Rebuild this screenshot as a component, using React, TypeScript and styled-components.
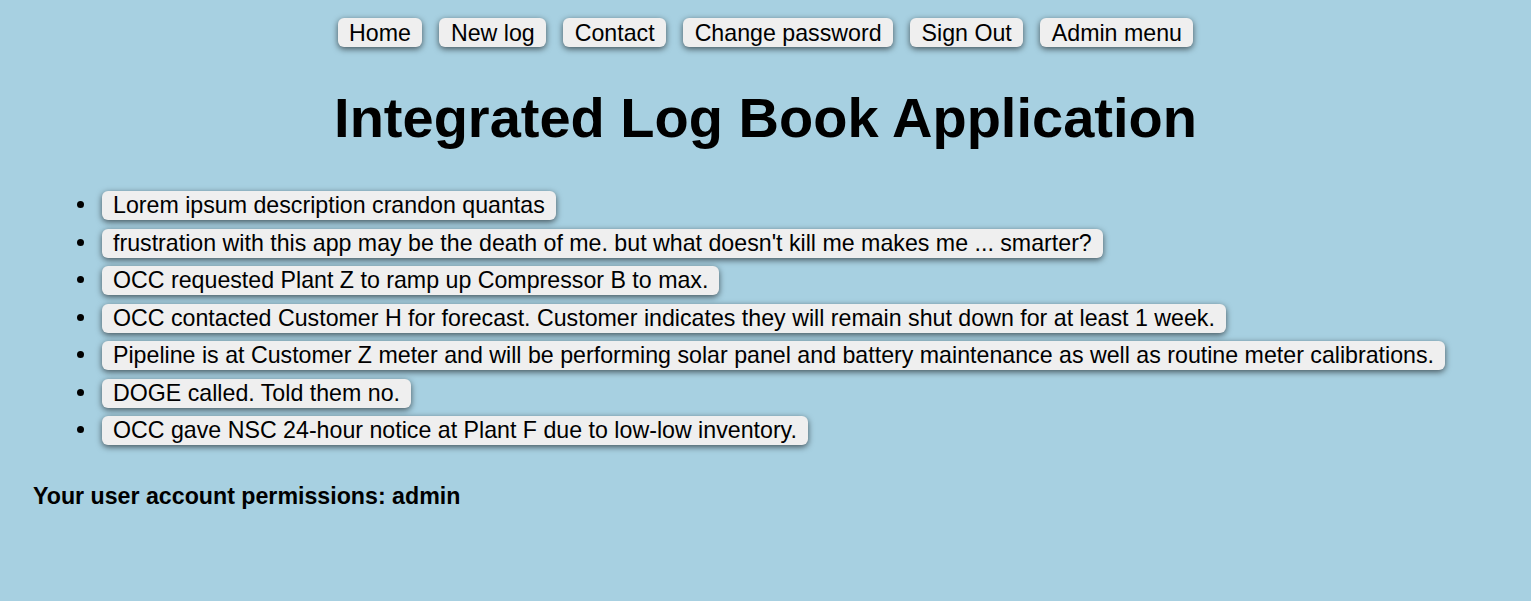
import React from "react";
import styled, { createGlobalStyle } from "styled-components";

const GlobalStyle = createGlobalStyle`
  body {
    margin: 0;
    background: #a7d0e1;
    font-family: "Liberation Sans", Arial, sans-serif;
    color: #000;
  }
`;

const links = ["Home", "New log", "Contact", "Change password", "Sign Out", "Admin menu"];

const logs = [
  "Lorem ipsum description crandon quantas",
  "frustration with this app may be the death of me. but what doesn't kill me makes me ... smarter?",
  "OCC requested Plant Z to ramp up Compressor B to max.",
  "OCC contacted Customer H for forecast. Customer indicates they will remain shut down for at least 1 week.",
  "Pipeline is at Customer Z meter and will be performing solar panel and battery maintenance as well as routine meter calibrations.",
  "DOGE called. Told them no.",
  "OCC gave NSC 24-hour notice at Plant F due to low-low inventory.",
];

const App: React.FC = () => {
  return (
    <PageS>
      <GlobalStyle />
      <NavS>
        {links.map((l) => (
          <NavButtonS key={l}>{l}</NavButtonS>
        ))}
      </NavS>
      <TitleS>Integrated Log Book Application</TitleS>
      <LogListS>
        {logs.map((entry, i) => (
          <LogItemS key={i}>
            <LogBoxS>{entry}</LogBoxS>
          </LogItemS>
        ))}
      </LogListS>
      <PermissionsS>Your user account permissions: admin</PermissionsS>
    </PageS>
  );
};

export default App;

const PageS = styled.div`
  min-height: 601px;
  padding: 18px 33px 0;
  box-sizing: border-box;
`;

const NavS = styled.nav`
  display: flex;
  justify-content: center;
  gap: 17px;
`;

const NavButtonS = styled.button`
  font-family: "Liberation Sans", Arial, sans-serif;
  font-size: 23.2px;
  height: 29px;
  padding: 1px 11.5px 0;
  background: #efefef;
  border: none;
  border-radius: 6px;
  box-shadow: 0 2px 6px rgba(0, 0, 0, 0.6);
  color: #000;
`;

const TitleS = styled.h1`
  margin: 38px 0 0;
  text-align: center;
  font-size: 56px;
  line-height: 66px;
  font-weight: bold;
`;

const LogListS = styled.ul`
  margin: 35px 0 0;
  padding-left: 65px;
  list-style: disc;
`;

const LogItemS = styled.li`
  font-size: 23.2px;
  line-height: 37.5px;
  padding-left: 4px;
`;

const LogBoxS = styled.span`
  display: inline-block;
  line-height: 29px;
  padding: 0 11px;
  background: #efefef;
  border-radius: 6px;
  box-shadow: 0 2px 6px rgba(0, 0, 0, 0.6);
  vertical-align: middle;
`;

const PermissionsS = styled.h3`
  margin: 34px 0 0;
  font-size: 23.2px;
  font-weight: bold;
`;
